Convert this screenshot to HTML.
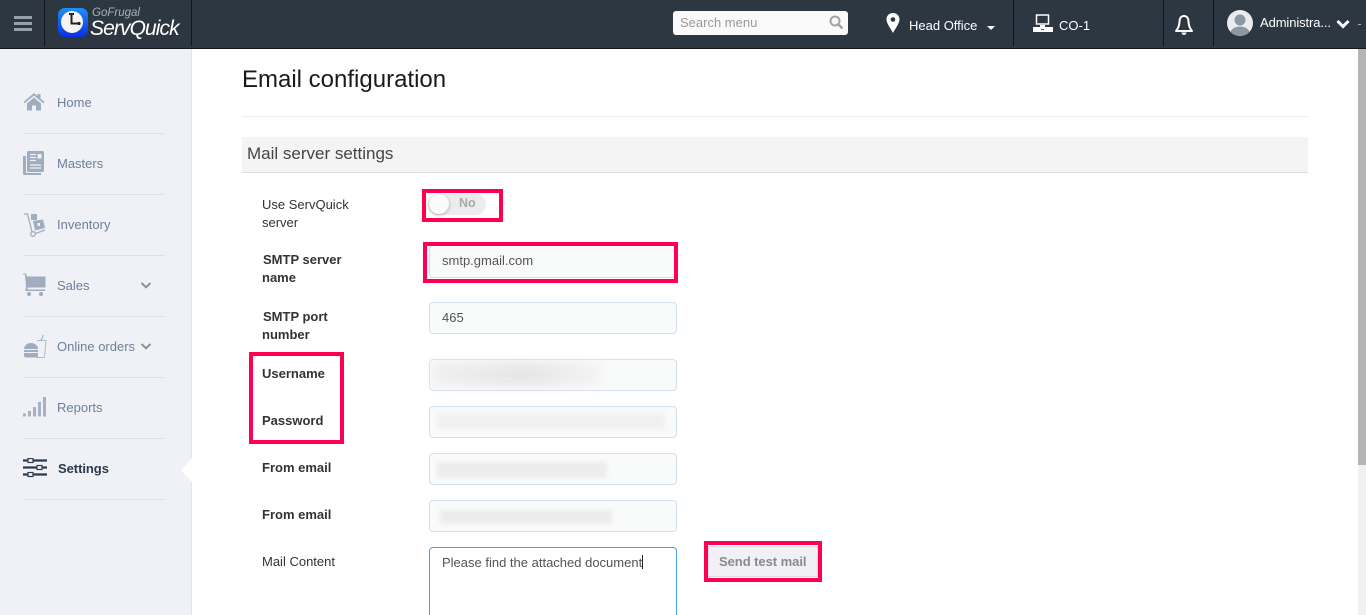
<!DOCTYPE html>
<html lang="en">
<head>
<meta charset="utf-8">
<title>Email configuration</title>
<style>
html,body{margin:0;padding:0;width:1366px;height:615px;overflow:hidden;background:#fff;font-family:"Liberation Sans",Arial,sans-serif;}
#wrap{position:relative;width:1366px;height:615px;overflow:hidden;}
.a{position:absolute;white-space:nowrap;}
#hdr{position:absolute;left:0;top:0;width:1366px;height:48px;background:#2d3741;border-bottom:1px solid #12181e;}
.sep{position:absolute;top:0;width:1px;height:46px;background:#11171c;}
#side{position:absolute;left:0;top:49px;width:191px;height:566px;background:#eff1f7;border-right:1px solid #e3e5ea;}
.nl{position:absolute;left:23px;width:142px;height:1px;background:#dde1e8;}
.nt{position:absolute;left:57px;font-size:13px;line-height:16px;color:#6f7f99;white-space:nowrap;}
.lb{position:absolute;left:262px;font-size:13px;line-height:18px;color:#333;}
.b{font-weight:bold;color:#333;}
.inp{position:absolute;left:429px;width:246px;height:30px;background:#f9fafa;border:1px solid #d3dfec;border-radius:4px;font-size:13px;line-height:30px;color:#555;text-indent:12px;}
.blur{position:absolute;background:#efefef;filter:blur(2px);}
.red{position:absolute;border:4px solid #ff0050;box-sizing:border-box;}
</style>
</head>
<body>
<div id="wrap">
<div id="hdr">
  <div class="sep" style="left:44px"></div>
  <div class="sep" style="left:191px"></div>
  <div class="sep" style="left:1013px"></div>
  <div class="sep" style="left:1163px"></div>
  <div class="sep" style="left:1213px"></div>
</div>
<!-- hamburger -->
<div class="a" style="left:14px;top:16px;width:18px;height:3px;background:#95a1ab"></div>
<div class="a" style="left:14px;top:22px;width:18px;height:3px;background:#95a1ab"></div>
<div class="a" style="left:14px;top:28px;width:18px;height:3px;background:#95a1ab"></div>
<!-- logo -->
<svg class="a" style="left:57px;top:7px" width="32" height="31" viewBox="0 0 32 31">
  <defs><linearGradient id="g" x1="0" y1="0" x2="0" y2="1"><stop offset="0" stop-color="#1f8ff5"/><stop offset="1" stop-color="#0b2fe0"/></linearGradient></defs>
  <rect x="1" y="1" width="30" height="29" rx="7" fill="url(#g)"/>
  <circle cx="15" cy="15" r="11" fill="#f4f4f2"/>
  <path d="M12 7h5M14.500 7v9.500h7" stroke="#222" stroke-width="2" fill="none"/>
  <circle cx="22" cy="16.500" r="1.600" fill="#222"/>
</svg>
<div class="a" style="left:92px;top:6px;font-size:11.500px;line-height:15px;font-style:italic;color:#a9b1b8">GoFrugal</div>
<div class="a" style="left:90px;top:16px;font-size:21px;line-height:26px;font-style:italic;color:#fff;letter-spacing:-.9px">ServQuick</div>
<!-- search -->
<div class="a" style="left:673px;top:11px;width:175px;height:24px;background:#fafafa;border-radius:3px"></div>
<div class="a" style="left:680px;top:15px;font-size:13px;line-height:16px;color:#9a9a9a">Search menu</div>
<svg class="a" style="left:828px;top:14px" width="16" height="16" viewBox="0 0 16 16"><circle cx="7" cy="7" r="4.500" fill="none" stroke="#a3a3a3" stroke-width="2"/><path d="M10.500 10.500L14.500 14.500" stroke="#a3a3a3" stroke-width="2.400"/></svg>
<!-- location -->
<svg class="a" style="left:885px;top:12px" width="16" height="22" viewBox="0 0 16 22"><path d="M8 1C4.200 1 1.500 3.800 1.500 7.400 1.500 11.500 6 17 8 21c2-4 6.500-9.500 6.500-13.600C14.500 3.800 11.800 1 8 1z" fill="#fff"/><circle cx="8" cy="7.500" r="2.300" fill="#2d3741"/></svg>
<div class="a" style="left:909px;top:18px;font-size:13px;line-height:16px;color:#fff">Head Office</div>
<div class="a" style="left:987px;top:26px;width:0;height:0;border-left:4px solid transparent;border-right:4px solid transparent;border-top:4px solid #fff"></div>
<!-- CO-1 -->
<svg class="a" style="left:1032px;top:14px" width="22" height="20" viewBox="0 0 22 20"><rect x="4.500" y="1" width="12" height="9" fill="none" stroke="#fff" stroke-width="1.500"/><path d="M8 11h5v2H8z" fill="#fff"/><rect x="1" y="13" width="20" height="5" fill="#fff"/><rect x="9" y="15" width="3" height="1" fill="#a04090"/></svg>
<div class="a" style="left:1059px;top:18px;font-size:13px;line-height:16px;color:#fff">CO-1</div>
<!-- bell -->
<svg class="a" style="left:1174px;top:14px" width="20" height="23" viewBox="0 0 20 23"><path d="M10 2C7 2 5.500 4.500 5.500 7.500c0 4-1.500 7-3.500 9.500h16c-2-2.500-3.500-5.500-3.500-9.500C14.500 4.500 13 2 10 2z" fill="none" stroke="#fff" stroke-width="2" stroke-linejoin="round"/><path d="M7.500 18.500a2.500 2.500 0 0 0 5 0z" fill="#fff"/></svg>
<!-- avatar -->
<svg class="a" style="left:1227px;top:10px" width="26" height="26" viewBox="0 0 26 26"><defs><clipPath id="c"><circle cx="13" cy="13" r="13"/></clipPath></defs><circle cx="13" cy="13" r="13" fill="#e9ebee"/><g clip-path="url(#c)"><circle cx="13" cy="10" r="5.500" fill="#8b97a3"/><ellipse cx="13" cy="23" rx="9.500" ry="6.500" fill="#8b97a3"/></g></svg>
<div class="a" style="left:1260px;top:15px;font-size:13px;line-height:16px;color:#fff;letter-spacing:-.1px">Administra...</div>
<svg class="a" style="left:1336px;top:19px" width="14" height="10" viewBox="0 0 14 10"><path d="M1.500 2l5.500 5.500L12.500 2" fill="none" stroke="#fff" stroke-width="3"/></svg>
<div class="a" style="left:1358px;top:24px;width:3px;height:1px;background:#aab"></div>

<!-- sidebar -->
<div id="side"></div>
<div class="nl" style="top:133px"></div>
<div class="nl" style="top:194px"></div>
<div class="nl" style="top:255px"></div>
<div class="nl" style="top:316px"></div>
<div class="nl" style="top:377px"></div>
<div class="nl" style="top:438px"></div>
<div class="nl" style="top:499px"></div>
<div class="nt" style="top:95px">Home</div>
<div class="nt" style="top:156px">Masters</div>
<div class="nt" style="top:217px">Inventory</div>
<div class="nt" style="top:278px">Sales</div>
<div class="nt" style="top:339px">Online orders</div>
<div class="nt" style="top:400px">Reports</div>
<div class="nt" style="top:461px;left:58px;font-weight:bold;color:#2d3a4c;letter-spacing:-.05px">Settings</div>
<svg class="a" style="left:23px;top:92px" width="22" height="19" viewBox="0 0 22 19"><path d="M11 1L0.500 10l1.200 1.300L11 3.500l9.300 7.800 1.200-1.300L17.500 6.500V2h-3v2z" fill="#9fadbf"/><path d="M4 11.500L11 5.500l7 6V18.500h-5v-5H9v5H4z" fill="#9fadbf"/></svg>
<svg class="a" style="left:22px;top:150px" width="23" height="26" viewBox="0 0 23 26"><path d="M1 6h3v17h15v2H2.500A1.500 1.500 0 0 1 1 23.500z" fill="#9fadbf"/><rect x="5" y="1" width="17" height="21" rx="1.500" fill="#9fadbf"/><path d="M8 4.500h6M8 7.500h6M8 10.500h6M8 15h11M8 18h11" stroke="#eff1f7" stroke-width="1.200"/><rect x="15.500" y="4" width="4" height="4.500" fill="#eff1f7"/></svg>
<svg class="a" style="left:23px;top:212px" width="24" height="26" viewBox="0 0 24 26"><path d="M1 2h3.500l4.500 18" fill="none" stroke="#9fadbf" stroke-width="1.300"/><circle cx="10" cy="22" r="2.300" fill="none" stroke="#9fadbf" stroke-width="1.300"/><path d="M12.500 21.500L22 18" stroke="#9fadbf" stroke-width="1.300"/><rect x="8" y="2" width="6" height="6" fill="#9fadbf"/><path d="M10 9l10-1.500 2 8.500-10 2.500z" fill="#9fadbf"/><rect x="14.500" y="11" width="2.500" height="3" fill="#eff1f7"/></svg>
<svg class="a" style="left:23px;top:273px" width="24" height="24" viewBox="0 0 24 24"><path d="M0 1h2.500l1 3H22v10H4.500" fill="none" stroke="#9fadbf" stroke-width="1"/><path d="M2 1.500h1l1.500 3H22V14H5l-.5 2.500H22V18H2l1-4z" fill="#9fadbf"/><circle cx="6" cy="21" r="2" fill="#9fadbf"/><circle cx="18" cy="21" r="2" fill="#9fadbf"/></svg>
<svg class="a" style="left:23px;top:334px" width="24" height="25" viewBox="0 0 24 25"><path d="M14 6.500h9l-1.500 17H13" fill="none" stroke="#b0bccb" stroke-width="1"/><path d="M18 6.500L20.500 1" stroke="#9fadbf" stroke-width="1"/><path d="M1 15a7 6 0 0 1 14 0z" fill="#9fadbf"/><rect x="1" y="16" width="14" height="2" fill="#9fadbf"/><path d="M1 19h14v2.500a2 2 0 0 1-2 2H3a2 2 0 0 1-2-2z" fill="#9fadbf"/></svg>
<svg class="a" style="left:23px;top:397px" width="24" height="20" viewBox="0 0 24 20"><rect x="0" y="16.500" width="3" height="3" fill="#a5b2c3"/><rect x="5" y="14" width="3" height="5.500" fill="#a5b2c3"/><rect x="10" y="10" width="3" height="9.500" fill="#a5b2c3"/><rect x="15" y="5" width="3" height="14.500" fill="#a5b2c3"/><rect x="20" y="0" width="3" height="19.500" fill="#a5b2c3"/></svg>
<svg class="a" style="left:23px;top:458px" width="24" height="20" viewBox="0 0 24 20"><path d="M0 2.500h24M0 9.500h24M0 16.500h24" stroke="#2d3a4c" stroke-width="2.200"/><rect x="5" y="0.500" width="5" height="4" fill="#eff1f7" stroke="#2d3a4c" stroke-width="1.200"/><rect x="14" y="7.500" width="5" height="4" fill="#eff1f7" stroke="#2d3a4c" stroke-width="1.200"/><rect x="5" y="14.500" width="5" height="4" fill="#eff1f7" stroke="#2d3a4c" stroke-width="1.200"/></svg>
<svg class="a" style="left:140px;top:281px" width="12" height="9" viewBox="0 0 12 9"><path d="M1.500 2l4.500 4.300L10.500 2" fill="none" stroke="#8a8f98" stroke-width="2"/></svg>
<svg class="a" style="left:140px;top:342px" width="12" height="9" viewBox="0 0 12 9"><path d="M1.500 2l4.500 4.300L10.500 2" fill="none" stroke="#8a8f98" stroke-width="2"/></svg>
<!-- active arrow -->
<svg class="a" style="left:180px;top:458px" width="12" height="24" viewBox="0 0 12 24"><path d="M12 0L1 12l11 12z" fill="#fff"/></svg>

<!-- content -->
<div class="a" style="left:242px;top:65px;font-size:24px;line-height:30px;color:#1a1a1a">Email configuration</div>
<div class="a" style="left:242px;top:116px;width:1066px;height:1px;background:#eee"></div>
<div class="a" style="left:242px;top:137px;width:1066px;height:35px;background:#f4f4f4;border-bottom:1px solid #ddd"></div>
<div class="a" style="left:247px;top:144px;font-size:17px;line-height:20px;color:#444">Mail server settings</div>

<div class="lb" style="top:196px">Use ServQuick<br>server</div>
<div class="lb b" style="top:251px;left:263px">SMTP server<br><span style="margin-left:-1px">name</span></div>
<div class="lb b" style="top:308px;left:263px">SMTP port<br><span style="margin-left:-1px">number</span></div>
<div class="lb b" style="top:365px">Username</div>
<div class="lb b" style="top:412px">Password</div>
<div class="lb b" style="top:459px">From email</div>
<div class="lb b" style="top:506px">From email</div>
<div class="lb" style="top:553px">Mail Content</div>

<!-- toggle -->
<div class="a" style="left:428px;top:194px;width:58px;height:21px;border-radius:11px;background:#ececee"></div>
<div class="a" style="left:429px;top:194px;width:20px;height:20px;border-radius:50%;background:#fbfbfb;box-shadow:0 1px 3px rgba(0,0,0,.3)"></div>
<div class="a" style="left:459px;top:195px;font-size:12.500px;line-height:16px;font-weight:bold;color:#aaa">No</div>

<div class="inp" style="top:245px;height:31px;line-height:30px">smtp.gmail.com</div>
<div class="inp" style="top:302px">465</div>
<div class="inp" style="top:359px"></div>
<div class="blur" style="left:432px;top:362px;width:170px;height:24px;filter:blur(5px);background:linear-gradient(90deg,#f0f0f0,#e6e6e6 55%,#f4f4f4)"></div>
<div class="inp" style="top:406px"></div>
<div class="blur" style="left:437px;top:414px;width:228px;height:15px;background:#f0f0f0"></div>
<div class="inp" style="top:453px"></div>
<div class="blur" style="left:437px;top:462px;width:170px;height:16px;background:#ececec"></div>
<div class="inp" style="top:500px"></div>
<div class="blur" style="left:440px;top:510px;width:172px;height:14px;background:#ececec"></div>
<div class="a" style="left:429px;top:547px;width:246px;height:80px;border:1px solid #4a9fea;border-radius:4px;background:#fff"></div>
<div class="a" style="left:442px;top:555px;font-size:13px;line-height:16px;color:#555">Please find the attached document</div>
<div class="a" style="left:642px;top:555px;width:1px;height:14px;background:#222"></div>

<div class="a" style="left:708px;top:546px;width:110px;height:31px;background:#f0f0f6;border:1px solid #dcdce2;box-sizing:border-box"></div>
<div class="a" style="left:719px;top:554px;font-size:13px;line-height:16px;font-weight:bold;color:#8a8a8a;letter-spacing:-.05px">Send test mail</div>

<!-- red highlight boxes -->
<div class="red" style="left:422px;top:189px;width:81px;height:33px"></div>
<div class="red" style="left:423px;top:242px;width:255px;height:41px"></div>
<div class="red" style="left:249px;top:352px;width:95px;height:92px"></div>
<div class="red" style="left:704px;top:541px;width:118px;height:41px"></div>

<!-- scrollbar -->
<div class="a" style="left:1358px;top:49px;width:8px;height:566px;background:#f1f1f1"></div>
<div class="a" style="left:1358px;top:49px;width:8px;height:416px;background:#b5b5b5"></div>
</div>
</body>
</html>
